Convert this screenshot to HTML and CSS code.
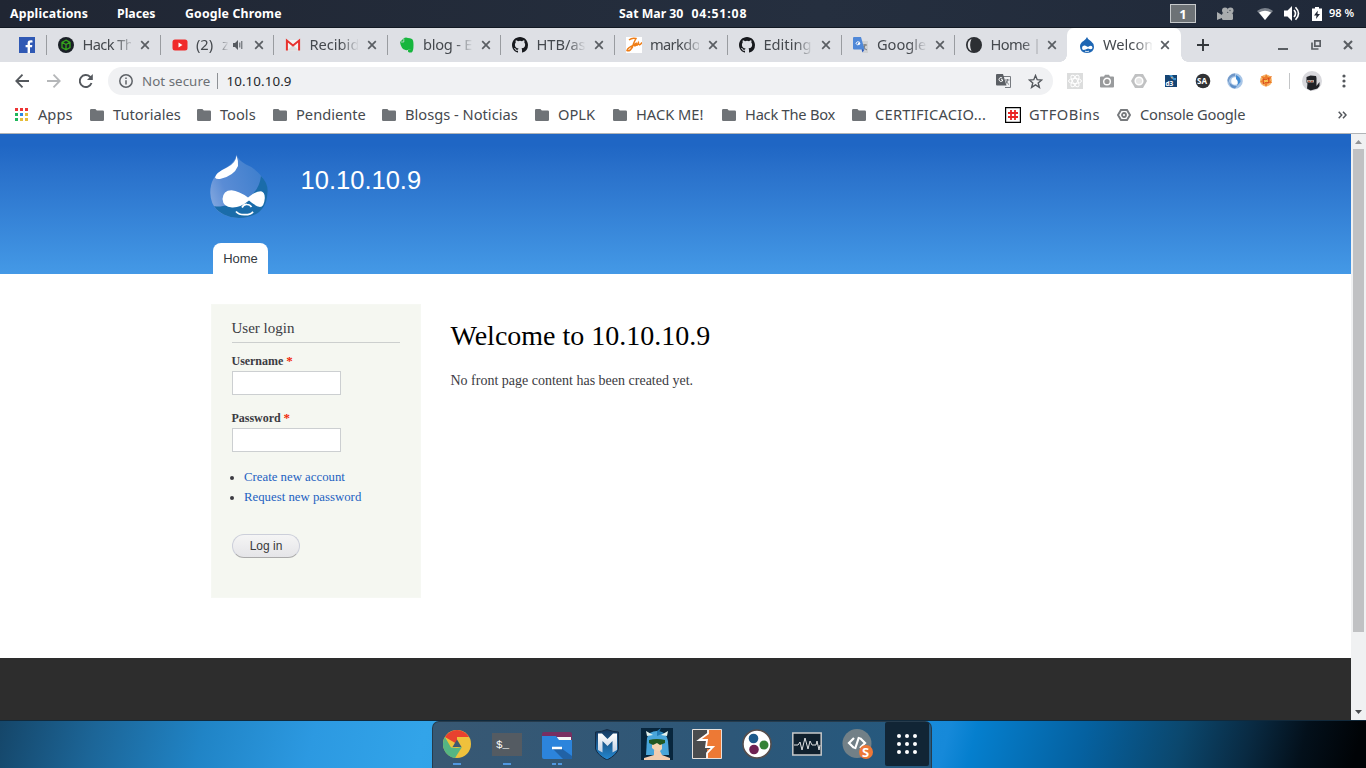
FILE: index.html
```html
<!DOCTYPE html>
<html lang="en">
<head>
<meta charset="utf-8">
<title>Welcome to 10.10.10.9</title>
<link rel="stylesheet" href="styles.css">
</head>
<body>
<svg class="defs" width="0" height="0" aria-hidden="true">
  <defs>
    <symbol id="close" viewBox="0 0 10 10"><path d="M1.200 1.200 8.800 8.800M8.800 1.200 1.200 8.800" stroke="#5a5e63" stroke-width="1.700" fill="none"/></symbol>
    <symbol id="folder" viewBox="0 0 14 12"><path d="M1.200 0h4.200l1.400 1.600h6q1.200 0 1.200 1.200v8q0 1.200-1.200 1.200H1.200Q0 12 0 10.800V1.200Q0 0 1.200 0Z" fill="#6f7377"/></symbol>
    <symbol id="github" viewBox="0 0 16 16"><path fill="#17191d" d="M8 0C3.580 0 0 3.580 0 8c0 3.540 2.290 6.530 5.470 7.590.4.070.550-.170.550-.380v-1.490c-2.010.370-2.530-.490-2.690-.940-.090-.230-.480-.940-.820-1.130-.280-.150-.680-.520-.010-.530.630-.010 1.080.580 1.230.820.720 1.210 1.870.870 2.330.660.070-.520.280-.870.510-1.070-1.780-.2-3.640-.890-3.640-3.950 0-.870.310-1.590.820-2.150-.080-.2-.360-1.020.080-2.120 0 0 .670-.210 2.200.820a7.600 7.600 0 0 1 4 0c1.530-1.040 2.200-.820 2.200-.820.440 1.100.160 1.920.080 2.120.510.560.820 1.270.820 2.150 0 3.070-1.870 3.750-3.650 3.950.290.250.540.730.540 1.480v2.190c0 .210.150.460.550.380A8 8 0 0 0 16 8c0-4.420-3.580-8-8-8Z"/></symbol>
    <linearGradient id="dropFill" x1="0" y1=".7" x2=".9" y2=".3"><stop offset="0" stop-color="#7fa5de"/><stop offset=".3" stop-color="#5a8cd5"/><stop offset="1" stop-color="#3f7fcd"/></linearGradient>
    <linearGradient id="shield" x1="0" y1="0" x2="0" y2="1"><stop offset="0" stop-color="#15365c"/><stop offset="1" stop-color="#2489d2"/></linearGradient>
    <linearGradient id="metal" x1="0" y1="0" x2="0" y2="1"><stop offset="0" stop-color="#fff"/><stop offset="1" stop-color="#c3d0e2"/></linearGradient>
  </defs>
</svg>

<header class="topbar">
  <nav class="topmenu"><span>Applications</span><span class="places">Places</span><span>Google Chrome</span></nav>
  <div class="clock"><span>Sat Mar 30</span><span class="time">04:51:08</span></div>
  <div class="status">
    <span class="workspace">1</span>
    <svg class="cam" width="18" height="14" viewBox="0 0 18 14" fill="#a9acae"><circle cx="8" cy="3.500" r="3"/><circle cx="13.500" cy="3.500" r="3"/><rect x="5" y="6" width="11" height="7" rx="1.500"/><path d="M0 5l5 3v3l-5 2Z"/><circle cx="13" cy="3.500" r=".8" fill="#59616b"/></svg>
    <svg class="wifi" width="16" height="12" viewBox="0 0 16 12"><path d="M0 3Q8-3 16 3L8 12Z" fill="#7b828c"/><path d="M2 4.500Q8 1 14 4.500L8 12Z" fill="#fff"/></svg>
    <svg class="vol" width="16" height="15" viewBox="0 0 16 15"><path d="M0 4.500h3.500L8 0v15l-4.500-4.500H0Z" fill="#fff"/><path d="M10 4q3 3.500 0 7M11.500 1.200q6 6.300 0 12.600" fill="none" stroke="#fff" stroke-width="1.600"/></svg>
    <svg class="bat" width="10" height="14" viewBox="0 0 10 14"><path d="M3 0h4v1.500h3V14H0V1.500h3Z" fill="#fff"/><path d="M5.800 3.500 2 8.500h2.500L4 12l4-5H5.500Z" fill="#202735"/></svg>
    <span class="percent">98 %</span>
  </div>
</header>

<div class="tabstrip">
  <div class="tab pinned"><svg width="16" height="16" viewBox="0 0 16 16"><rect width="16" height="16" fill="#3059b4"/><path d="M11 16v-5.700h2l.3-2.300H11V6.700c0-.7.300-1.100 1.200-1.100h1.300V3.400C11 3 8.600 3.300 8.600 6.200V8h-2v2.300h2V16Z" fill="#fff"/></svg></div>
  <div class="tab"><svg class="fav" width="16" height="16" viewBox="0 0 16 16"><circle cx="8" cy="8" r="8" fill="#1b2027"/><path d="M8 3.200 12 5.300v5.200L8 12.800 4 10.500V5.300ZM4 5.300l4 2.200 4-2.200M8 7.500v5.300" fill="none" stroke="#35a51c" stroke-width="1.300"/></svg><span class="title tighter">Hack Th</span><svg class="x"><use href="#close"/></svg></div>
  <div class="tab audio"><svg class="fav" width="16" height="16" viewBox="0 0 16 16"><rect x=".5" y="2.500" width="15" height="11" rx="2.500" fill="#f02a2a"/><path d="M6.500 5.500 10.500 8l-4 2.500Z" fill="#fff"/></svg><span class="title">(2) z</span><svg class="sound" width="12" height="10" viewBox="0 0 12 10"><path d="M0 3h2l3-3v10L2 7H0Z" fill="#565a60"/><path d="M6.800 2.500v5M8.800 1v8" stroke="#565a60"/></svg><svg class="x"><use href="#close"/></svg></div>
  <div class="tab"><svg class="fav" width="16" height="16" viewBox="0 0 16 16"><path d="M2 3h12v10.500H2Z" fill="#f3f3f3"/><path d="M2 13.500 8 8l6 5.500Z" fill="#ddd"/><path d="M1.900 13.500v-10L8 8.500l6.100-5v10" fill="none" stroke="#e8322e" stroke-width="2"/></svg><span class="title">Recibid</span><svg class="x"><use href="#close"/></svg></div>
  <div class="tab"><svg class="fav" width="16" height="16" viewBox="0 0 16 16"><path d="M1 5 5 1q2-1 4 0 2 0 4 1 1.500 1 1.500 6 0 7-2 7.500-4 .5-3.500-2 .5-2 3-1.200-1-.8-2.500 0-1 1.500-3 .7Q2 12 1 5Z" fill="#17b63e"/><path d="M1.800 5h3V1.500" fill="none" stroke="#dee0e5" stroke-width=".7"/></svg><span class="title tight">blog - E</span><svg class="x"><use href="#close"/></svg></div>
  <div class="tab"><svg class="fav" width="16" height="16"><use href="#github"/></svg><span class="title">HTB/as</span><svg class="x"><use href="#close"/></svg></div>
  <div class="tab"><svg class="fav" width="16" height="16" viewBox="0 0 16 16"><path d="M0 0h16v16H0Z" fill="#fff"/><path d="M3 3q3-2.500 7-1.500Q7 7 6.500 10 3.500 15 1 13.500q1-3 6-5l2-1.500q-1 4 1.500 0 0 3 2-1 .500 4 3.500-.5" fill="none" stroke="#ef7d16" stroke-width="1.500"/></svg><span class="title tighter">markdo</span><svg class="x"><use href="#close"/></svg></div>
  <div class="tab"><svg class="fav" width="16" height="16"><use href="#github"/></svg><span class="title">Editing</span><svg class="x"><use href="#close"/></svg></div>
  <div class="tab"><svg class="fav" width="16" height="16" viewBox="0 0 16 16"><path d="M7 4h8v12h-5Z" fill="#d0d2d4"/><path d="M9 8h5m-2-1v1q0 3-3 5m1-4q1 3 4 4" stroke="#777" fill="none"/><path d="M1 0h7l3.500 12.500H1Q0 12.500 0 11.500V1Q0 0 1 0Z" fill="#4f88d8"/><path d="M7 5.500q-3-2-4 .8 1 3 4 .7V6.500H5" stroke="#fff" fill="none"/><path d="m8.500 12.500 1 3 2-3Z" fill="#2858b8"/></svg><span class="title">Google</span><svg class="x"><use href="#close"/></svg></div>
  <div class="tab last"><svg class="fav" width="16" height="16" viewBox="0 0 16 16"><circle cx="8" cy="8" r="8" fill="#2c2f33"/><path d="M5.500 1.800a7 7 0 0 0 0 12.400Q2.800 8 5.500 1.800Z" fill="#e4e5e8"/></svg><span class="title tighter">Home |</span><svg class="x"><use href="#close"/></svg></div>
  <div class="tab active"><svg class="fav" width="16" height="16" viewBox="0 0 16 16"><path d="M8 0q.5 2.500 4 4.300Q15 6.500 15 10q0 5.500-7 6-7-.5-7-6.500 0-3.500 3.500-5.500Q7 2.500 8 0Z" fill="#1d66b4"/><path d="M3 11q0-3 3-2.500l3 1.500q4-2.500 4.500.5 0 3-4.500 1-6 3-6-.5Z" fill="#fff"/><path d="M6 14.200q2 1 4 0" fill="none" stroke="#fff" stroke-width=".8"/></svg><span class="title">Welcom</span><svg class="x"><use href="#close"/></svg></div>
  <svg class="newtab" width="12" height="12" viewBox="0 0 12 12"><path d="M6 0v12M0 6h12" stroke="#33373b" stroke-width="1.900"/></svg>
  <div class="winctl">
    <svg width="10" height="10" viewBox="0 0 10 10"><path d="M0 9h10" stroke="#5a5e63" stroke-width="2"/></svg>
    <svg width="10" height="10" viewBox="0 0 10 10"><path d="M1 2.500V9h6.500M3.800.800h5.400v5.400H3.800Z" fill="none" stroke="#5a5e63" stroke-width="1.700"/></svg>
    <svg width="10" height="10" viewBox="0 0 10 10"><path d="m1 1 8 8M9 1 1 9" stroke="#5a5e63" stroke-width="2.100"/></svg>
  </div>
</div>

<div class="toolbar">
  <svg class="back" width="14" height="14" viewBox="0 0 14 14"><path d="M14 7H1.500M7.500.7 1.300 7l6.200 6.300" fill="none" stroke="#54585d" stroke-width="1.800"/></svg>
  <svg class="fwd" width="14" height="14" viewBox="0 0 14 14"><path d="M0 7h12.500M6.500.7 12.700 7l-6.200 6.300" fill="none" stroke="#b5b7b9" stroke-width="1.800"/></svg>
  <svg class="reload" width="14" height="14" viewBox="0 0 14 14"><path d="M12.500 9A6 6 0 1 1 11 2.700L12.200 4" fill="none" stroke="#54585d" stroke-width="1.900"/><path d="M13.800 0v6H8Z" fill="#54585d"/></svg>
  <div class="omnibox">
    <svg width="14" height="14" viewBox="0 0 14 14"><circle cx="7" cy="7" r="6.200" fill="none" stroke="#5f6368" stroke-width="1.500"/><path d="M7 6.200v4.300M7 3.400v1.600" stroke="#5f6368" stroke-width="1.500"/></svg>
    <span class="secure">Not secure</span><span class="bar"></span><span class="url">10.10.10.9</span>
    <svg class="translate" width="15" height="14" viewBox="0 0 15 14"><path d="M7 2.500h7.500v11H9" fill="none" stroke="#777b80"/><path d="M0 1Q0 0 1 0h6l3.500 11.500H1q-1 0-1-1Z" fill="#5b5f64"/><path d="M6.200 4Q3.500 2.700 3 5.500q.7 3 3.500 1.500V5.700H5" fill="none" stroke="#fff"/><path d="M9 6h4.500m-2-1v1q0 2-2 4m.500-3q1 2 3 3.500" stroke="#777b80" fill="none"/></svg>
    <svg class="star" width="15" height="15" viewBox="0 0 15 15"><path d="m7.500 1.500 1.700 4.200 4.500.3-3.500 2.900 1.200 4.500-3.900-2.500-3.900 2.500 1.200-4.500L1.300 6l4.500-.3Z" fill="none" stroke="#54585d" stroke-width="1.400"/></svg>
  </div>
  <div class="extensions">
    <svg viewBox="0 0 16 16"><path d="M0 0h16v16H0Z" fill="#dcdddd"/><g fill="none" stroke="#fff" stroke-width="1"><ellipse cx="8" cy="8" rx="6.500" ry="2.500"/><ellipse cx="8" cy="8" rx="6.500" ry="2.500" transform="rotate(60 8 8)"/><ellipse cx="8" cy="8" rx="6.500" ry="2.500" transform="rotate(120 8 8)"/></g></svg>
    <svg viewBox="0 0 16 16"><path d="M2 3.500h3l1-1.700h4l1 1.700h3q1 0 1 1v9q0 1-1 1H2q-1 0-1-1v-9q0-1 1-1Z" fill="#999b9d"/><circle cx="8" cy="8.500" r="3.300" fill="#999" stroke="#fff" stroke-width="1.400"/></svg>
    <svg viewBox="0 0 16 16"><path d="M4 1h8l4 7-4 7H4L0 8Z" fill="#c0c1c2"/><circle cx="8" cy="8" r="3.800" fill="#e6e6e6" stroke="#fff" stroke-width="1.500"/></svg>
    <svg viewBox="0 0 16 16"><path d="M2 2h12v12H2Z" fill="#164473"/><path d="M6 2h3l2 3h2v2q-3 1-4-2Z" fill="#3e93cd"/><path d="M7.500 4.500l2-.5v2Z" fill="#f7b079"/><text x="2.500" y="12.500" class="d3">d3</text></svg>
    <svg viewBox="0 0 16 16"><circle cx="8" cy="8" r="7.300" fill="#303235"/><text x="2" y="11" class="sa">SA</text></svg>
    <svg viewBox="0 0 16 16"><circle cx="8" cy="8" r="5.800" fill="none" stroke="#a8c5e6" stroke-width="4"/><path d="M8 .5Q2 1 .5 7l1 3q0-6 6.500-7Z" fill="#7198c8"/><path d="M9 2q5 2 4.500 7L10 13q2-5-1-7Z" fill="#418bd3"/><path d="M2 9q3 4 8 4l-2 2.500Q3 15 2 9Z" fill="#6090c8"/></svg>
    <svg viewBox="0 0 16 16"><circle cx="7" cy="7.500" r="6" fill="#f6b66b"/><path d="m7 1 2 3 4-1-2 4 2 3-4 0-2 4-2-4-4-1 3-3-2-3 4 1Z" fill="#ed7d2b"/><path d="m4 6 3 1 3-2-1 3 1 2-3-1-3 2 1-3Z" fill="#ffe35c" stroke="#d43b1b" stroke-width=".8"/></svg>
  </div>
  <span class="divider"></span>
  <svg class="avatar" width="20" height="20" viewBox="0 0 20 20"><circle cx="10" cy="10" r="10" fill="#d9d9dd"/><path d="m4.500 6 4-1.500 5.500.5.500 2v8l3-4v4l-2 2.500-7 2-3.500-2 .5-5-1-1Z" fill="#202226"/><path d="M5 9h7v2.500H5Z" fill="#aaa89e"/><path d="m6 10 2 1M9 11l2-1" stroke="#b74831"/></svg>
  <svg class="menu" width="4" height="14" viewBox="0 0 4 14" fill="#54585d"><circle cx="2" cy="2" r="1.600"/><circle cx="2" cy="7" r="1.600"/><circle cx="2" cy="12" r="1.600"/></svg>
</div>

<nav class="bookmarks">
  <div><svg width="13" height="13" viewBox="0 0 13 13"><path d="M0 0h3v3H0ZM5 0h3v3H5ZM10 0h3v3h-3Z" fill="#ed3434"/><path d="M0 5h3v3H0ZM0 10h3v3H0Z" fill="#1fb75b"/><path d="M5 5h3v3H5Z" fill="#2c87e2"/><path d="M10 5h3v3h-3ZM5 10h3v3H5ZM10 10h3v3h-3Z" fill="#e6bd39"/></svg><span class="apps">Apps</span></div>
  <div><svg class="folder"><use href="#folder"/></svg><span>Tutoriales</span></div>
  <div><svg class="folder"><use href="#folder"/></svg><span>Tools</span></div>
  <div><svg class="folder"><use href="#folder"/></svg><span>Pendiente</span></div>
  <div><svg class="folder"><use href="#folder"/></svg><span>Blosgs - Noticias</span></div>
  <div><svg class="folder"><use href="#folder"/></svg><span>OPLK</span></div>
  <div><svg class="folder"><use href="#folder"/></svg><span>HACK ME!</span></div>
  <div><svg class="folder"><use href="#folder"/></svg><span class="narrow">Hack The Box</span></div>
  <div><svg class="folder"><use href="#folder"/></svg><span class="wide">CERTIFICACIO...</span></div>
  <div><svg width="16" height="16" viewBox="0 0 16 16"><path d="M.6.6h14.800v14.800H.6Z" fill="#fff" stroke="#000" stroke-width="1.200"/><path d="M6 3v10M10 3v10M3 6h10M3 10h10" stroke="#e92525" stroke-width="1.800"/></svg><span class="gtfo">GTFOBins</span></div>
  <div><svg width="14" height="14" viewBox="0 0 14 14"><path d="M4 2h6l3 5-3 5H4L1 7Z" fill="none" stroke="#777a7d" stroke-width="2"/><circle cx="7" cy="7" r="2" fill="none" stroke="#777a7d" stroke-width="1.800"/></svg><span class="narrow">Console Google</span></div>
  <div><svg width="9" height="8" viewBox="0 0 9 8"><path d="m.7.700 3 3.300-3 3.300M5 .7 8 4 5 7.300" fill="none" stroke="#54585d" stroke-width="1.500"/></svg></div>
</nav>

<div class="viewport">
  <div class="page">
    <header class="site-head">
      <div class="brand">
        <svg width="58" height="66" viewBox="0 0 58 66">
          <path d="M26.500.500Q28 6 36 10.500 42 12.500 48 18.500 57.300 27 57.300 38 56 63 29 64 1 62 .3 39 0 23 13 15.500 25 9 26.500.500Z" fill="url(#dropFill)"/>
          <path d="M51 22q8 8 6.300 18Q56 63 29 64 11 63 4 52q4 1 9 0 35-4 38-30Z" fill="#1a6caa"/>
          <path d="M26.500 1.500Q26 9 17 13.500 6 18.500 5 23.500q1 2 5 1.500Q24 22 28 12 28.500 7 26.500 1.500Z" fill="#fff"/>
          <path d="M12.500 45q.5-8.500 9-8.700Q29 37 38 43.500 45 37.500 51 37.200q4 1 3.800 7Q54 53 50 53 45 52 39 46.500 30 54 22 53.500 13 53 12.500 45Z" fill="#fff"/>
          <path d="M32 53.500q2-3.500 5-3 3 0 4.500 2.500" fill="none" stroke="#fff" stroke-width="1.700"/>
          <path d="M26 57.500q3 3.500 9 3.200 6 0 8-3" fill="none" stroke="#fff" stroke-width="1.800"/>
        </svg>
        <a class="site-name">10.10.10.9</a>
      </div>
      <a class="home">Home</a>
    </header>
    <main class="content">
      <section class="login">
        <h2>User login</h2>
        <label>Username <b>*</b></label><input type="text">
        <label class="second">Password <b>*</b></label><input type="password">
        <ul><li><a>Create new account</a></li><li><a>Request new password</a></li></ul>
        <button>Log in</button>
      </section>
      <article><h1>Welcome to 10.10.10.9</h1><p>No front page content has been created yet.</p></article>
    </main>
    <footer class="site-foot"></footer>
  </div>
  <div class="scrollbar">
    <svg width="7" height="4" viewBox="0 0 7 4"><path d="M0 4 3.500 0 7 4Z" fill="#929497"/></svg>
    <div class="thumb"></div>
    <svg class="down" width="7" height="4" viewBox="0 0 7 4"><path d="m0 0 3.500 4L7 0Z" fill="#494b4e"/></svg>
  </div>
</div>

<div class="desktop">
  <div class="dock">
    <div class="app run"><svg viewBox="0 0 32 32"><circle cx="16" cy="16" r="14" fill="#efc13c"/><path d="M16 16 3.900 9A14 14 0 0 1 28.100 9H16Z" fill="#e8412f"/><path d="M3.900 9 10 19.500 16 20l5-1-7 11A14 14 0 0 1 3.900 9Z" fill="#55b583"/><path d="m16 11.500 4.500 7.500h-9Z" fill="#3f5972"/></svg></div>
    <div class="app run"><svg viewBox="0 0 32 32"><path d="M1 5h30v23H1Z" fill="#545b62"/><text x="5" y="20" class="prompt">$_</text></svg></div>
    <div class="app run two"><svg viewBox="0 0 32 32"><path d="M1 6q0-2 2-2h26q2 0 2 2v12H1Z" fill="#782e61"/><path d="M16 9h14v6H16Z" fill="#f5f5f5"/><path d="M1 8h14l3 4h13v17q0 2-2 2H3q-2 0-2-2Z" fill="#2c84dc"/><path d="m20 20 11 8v3H22L12 21Z" fill="#2162a6"/><path d="M11 20h10" stroke="#fff" stroke-width="2.500"/></svg></div>
    <div class="app"><svg viewBox="0 0 32 32"><path d="M4.500 4q6 0 11.500-2.500Q22 4 27.500 4v17q-2 6-11.500 11Q6.500 27 4.500 21Z" fill="url(#shield)" stroke="#142c45"/><path d="M7 22V5.500h4l5.500 5.500L22 5.500h4V22l-4.500 2.500V13l-5 5-5-5v11.500Z" fill="url(#metal)"/></svg></div>
    <div class="app"><svg viewBox="0 0 32 32"><path d="M0 0h32v32H0Z" fill="#08263d"/><path d="M6 10Q8 3 16 3q9 0 11 10l1 14H5Z" fill="#49a5da"/><path d="M11 14h10v7l-4 4-6-5Z" fill="#f4d5b4"/><path d="m13 22 6 1 2 4 8 3v2H3v-2l10-3Z" fill="#f2ccb0"/><path d="M8 12q8-2 16 0v3l-5 2-3-2-4 2-4-2Z" fill="#205823"/><path d="M6 8 5 3l7 4M26 8l1-5-7 4" fill="#e4f2ed"/><path d="m16 3 4-3-2 4 5 1-7 3Z" fill="#237cb6"/></svg></div>
    <div class="app"><svg viewBox="0 0 32 32"><path d="M1.500 1.500h29v29h-29Z" fill="#4a4c4e"/><path d="M17 1.500h13.500v29H16V21h6v-3h-7l1-7H8l9-6Z" fill="#ed7935"/><path d="M17 1.500v4l-9 6.500h8l-1 7h7l-6 6v5" fill="none" stroke="#fff" stroke-width="1.800"/><path d="M1.500 1.500h29v29h-29Z" fill="none" stroke="#e6e0dc"/></svg></div>
    <div class="app"><svg viewBox="0 0 32 32"><circle cx="16" cy="16" r="14" fill="#fff" stroke="#564d4b" stroke-width="1.500"/><circle cx="12.500" cy="10.500" r="4.800" fill="#1d5a8b"/><circle cx="23" cy="17" r="4.500" fill="#358235"/><circle cx="13" cy="21.500" r="4.800" fill="#6e2252"/></svg></div>
    <div class="app"><svg viewBox="0 0 32 32"><path d="M1.800 5h28.400v22H1.800Z" fill="#10202d" stroke="#c7c9ca" stroke-width="1.500"/><path d="M3 17h4l2-3 2 8 3-12 3 11 2-8 2 4h4l1-4 2 9 1-5" fill="none" stroke="#e0e2e3" stroke-width="1"/></svg></div>
    <div class="app"><svg viewBox="0 0 32 32"><circle cx="16" cy="15.500" r="14.500" fill="#728087"/><path d="m13 10-5 5 5 5M19 10l5 5-5 5M18 9l-4 12" fill="none" stroke="#fff" stroke-width="2.200"/><circle cx="25" cy="24" r="7" fill="#ed7838"/><text x="21" y="29" class="s">S</text></svg></div>
    <div class="app grid"><svg viewBox="0 0 32 32" fill="#fff"><circle cx="8" cy="8" r="2"/><circle cx="16" cy="8" r="2"/><circle cx="24" cy="8" r="2"/><circle cx="8" cy="16" r="2"/><circle cx="16" cy="16" r="2"/><circle cx="24" cy="16" r="2"/><circle cx="8" cy="24" r="2"/><circle cx="16" cy="24" r="2"/><circle cx="24" cy="24" r="2"/></svg></div>
  </div>
</div>
</body>
</html>
```

FILE: styles.css
```css
* { box-sizing: border-box; }
body { margin: 0; width: 1366px; height: 768px; overflow: hidden; background: #fff; font-family: "Noto Sans", sans-serif; display: flex; flex-direction: column; }
svg { display: block; flex: none; }
.defs { position: absolute; }

.topbar { height: 28px; flex: none; display: grid; grid-template-columns: 619px 551px 1fr; background: linear-gradient(90deg, #202633, #252f3f 60%, #202939); border-bottom: 1px solid #121923; color: #fff; font-size: 12.300px; font-weight: 700; line-height: 28px; white-space: pre; }
.topmenu { display: grid; grid-template-columns: 107px 68px 1fr; padding-left: 10px; letter-spacing: .180px; }
.topmenu .places { letter-spacing: 0; }
.clock { display: flex; gap: 8px; }
.time { letter-spacing: .850px; }
.status { display: flex; align-items: center; height: 27px; }
.workspace { width: 26px; height: 19px; border: 1px solid #c6c9cb; background: #6d7276; text-align: center; line-height: 18px; font-size: 13px; }
.cam { margin-left: 21px; }
.wifi { margin-left: 22px; }
.vol { margin-left: 11px; }
.bat { margin-left: 12px; }
.percent { margin-left: 7px; font-size: 11px; font-weight: 600; line-height: 26px; padding-bottom: 1px; }

.tabstrip { height: 34px; flex: none; display: flex; background: #dee0e5; color: #45494e; font-size: 14.670px; }
.tab { width: 113.500px; height: 34px; flex: none; display: flex; align-items: center; padding-left: 11px; background: linear-gradient(#999ca0, #999ca0) right 7px / 1px 20px no-repeat; }
.tab.pinned { width: 47.400px; padding-left: 19px; }
.tab .title { width: 49px; height: 34px; margin-left: 8px; overflow: hidden; white-space: pre; line-height: 33px; -webkit-mask-image: linear-gradient(90deg, #000 65%, transparent 102%); mask-image: linear-gradient(90deg, #000 65%, transparent 102%); }
.tab .title.tight { letter-spacing: -.250px; }
.tab .title.tighter { letter-spacing: -.6px; -webkit-mask-image: linear-gradient(90deg, #000 65%, transparent 110%); mask-image: linear-gradient(90deg, #000 65%, transparent 110%); }
.x { width: 10px; height: 10px; margin-left: 9px; }
.tab.audio .title { width: 32px; word-spacing: 5px; }
.sound { margin-left: 5px; }
.folder { width: 14px; height: 12px; }
.tab.last { background: none; width: 111.600px; }
.tab.last .x { margin-left: 8px; }
.tab.active { position: relative; width: 114px; padding-left: 12px; background: #fff; border-radius: 7px 7px 0 0; }
.tab.active .x { margin-left: 8px; }
.tab.active::before, .tab.active::after { content: ""; position: absolute; bottom: 0; width: 7px; height: 7px; }
.tab.active::before { left: -7px; background: radial-gradient(circle at 0 0, #dee0e5 6.500px, #fff 7px); }
.tab.active::after { right: -7px; background: radial-gradient(circle at 100% 0, #dee0e5 6.500px, #fff 7px); }
.newtab { margin: 11px 0 0 16px; }
.winctl { margin: 12px 13px 0 auto; display: flex; gap: 22.500px; }

.toolbar { height: 38px; flex: none; display: flex; align-items: center; padding-left: 15px; }
.fwd { margin-left: 18px; }
.reload { margin-left: 18px; }
.omnibox { width: 945px; height: 28px; margin-left: 15px; padding-left: 11px; border-radius: 14px; background: #f0f1f3; display: flex; align-items: center; font-size: 13.330px; color: #25282b; }
.secure { width: 75px; margin-left: 9px; color: #6c7075; white-space: nowrap; letter-spacing: .050px; }
.bar { width: 1px; height: 16px; background: #8e9195; }
.url { margin-left: 8.500px; letter-spacing: .1px; }
.translate { margin-left: auto; }
.star { margin: 0 10px 0 17px; }
.extensions { display: flex; gap: 16px; margin-left: 14px; }
.extensions svg { width: 16px; height: 16px; }
.divider { width: 1px; height: 16px; margin-left: 14px; background: #c3c5c7; }
.avatar { margin-left: 12px; }
.menu { margin-left: 20px; }
.d3 { font: bold 6.500px "Noto Sans", sans-serif; fill: #fff; }
.sa { font: bold 8px "Noto Sans", sans-serif; fill: #fff; }

.bookmarks { height: 34px; flex: none; display: grid; grid-template-columns: 75px 107px 76px 109px 153px 78px 109px 130px 153px 112px 221px 1fr; padding: 0 0 4px 15px; border-bottom: 1px solid #b1b4b7; color: #45494e; font-size: 14.670px; white-space: nowrap; }
.bookmarks div { display: flex; align-items: center; gap: 9px; height: 29px; }
.bookmarks span { padding-bottom: 2px; }
.bookmarks .apps { margin-left: 1px; }
.bookmarks .narrow { letter-spacing: -.230px; }
.bookmarks .wide { letter-spacing: .250px; }
.bookmarks .gtfo { margin-left: -1px; letter-spacing: .450px; }

.viewport { height: 586px; flex: none; display: grid; grid-template-columns: 1351px 15px; }
.page { display: flex; flex-direction: column; background: #fff; }
.site-head { height: 140px; padding: 20px 0 0 210px; background: linear-gradient(#1f66c4 8%, #2970ca 25%, #4499e6); }
.brand { display: flex; height: 89px; }
.site-name { margin: 10px 0 0 32.600px; color: #fff; font: 25.500px/32px "Liberation Sans", sans-serif; }
.home { display: block; width: 55px; height: 31px; margin-left: 3px; border-radius: 8px 8px 0 0; background: #fff; color: #333a40; text-align: center; font: 13px/32px "Liberation Sans", sans-serif; }
.content { height: 384px; padding: 30px 0 0 211px; display: flex; font-family: "Liberation Serif", serif; color: #3b3b42; }
.login { width: 210px; height: 294px; padding: 14px 20px 0; background: #f5f7f1; border: 1px solid #f6f8f3; }
.login h2 { margin: 0 0 10px; height: 24px; border-bottom: 1px solid #cccfce; font-size: 15px; font-weight: normal; line-height: 18px; text-indent: -.5px; }
.login label { display: block; height: 18px; font-size: 12px; font-weight: bold; line-height: 16px; text-indent: -.5px; letter-spacing: -.030px; }
.login label b { color: #f02808; font-size: 13px; line-height: 12px; }
.login .second { margin-top: 15px; }
.login input { display: block; width: 109px; height: 24px; border: 1px solid #cccfd1; padding: 2px; background: #fff; }
.login ul { margin: 15px 0 0; padding-left: 12px; font-size: 12.800px; line-height: 20px; }
.login ul a { color: #1d62c1; }
.login button { display: block; width: 68px; height: 24px; margin-top: 27px; padding: 0; border: 1px solid #cccfda; border-bottom-color: #aaa; border-radius: 12px; background: linear-gradient(#f5f5f5, #e5e5e8); color: #3a3a3a; font: 12px "Liberation Sans", sans-serif; }
article { margin-left: 29.500px; }
article h1 { margin: 16px 0 0; color: #000; font-size: 28px; font-weight: normal; line-height: 32px; }
article p { margin: 19px 0 0; font-size: 14px; line-height: 20px; }
.site-foot { flex: 1; background: #2d2d2d; }
.scrollbar { background: #f0f1f2; display: flex; flex-direction: column; align-items: center; padding-top: 6px; }
.thumb { width: 11px; height: 483px; margin-top: 5px; background: #c0c1c3; }
.down { margin: auto 0 6px; }

.desktop { height: 48px; flex: none; display: flex; justify-content: flex-start; padding-left: 432px; border-top: 1px solid #11293b; background: linear-gradient(105deg, #154669 0, #1c6597 7%, #2084c6 15%, #2c99e1 23%, #32a4e9 31%, #1689d9 69%, #057fce 71%, #0561a0 79%, #0b476d 86%, #092a42 91%, #03101b 95%, #000306 99%); }
.dock { width: 500px; height: 47px; padding-left: 2px; display: flex; gap: 6px; border: 1px solid #263b4c; border-bottom: 0; border-radius: 7px 7px 0 0; background: linear-gradient(90deg, #385873, #2d5778 60%, #24597f); }
.app { width: 44px; height: 44px; display: flex; flex-direction: column; align-items: center; padding-top: 6px; }
.app svg { width: 32px; height: 32px; }
.app.run::after { content: ""; width: 8px; height: 2px; margin-top: 3px; background: #5097df; }
.app.two::after { width: 10px; background: linear-gradient(90deg, #5097df 4px, transparent 4px 6px, #5097df 6px); }
.app.grid { border-radius: 2px; background: #112535; }
.prompt { font: 11px "Liberation Mono", monospace; fill: #fff; }
.s { font: bold 13px "Noto Sans", sans-serif; fill: #fff; }
```
